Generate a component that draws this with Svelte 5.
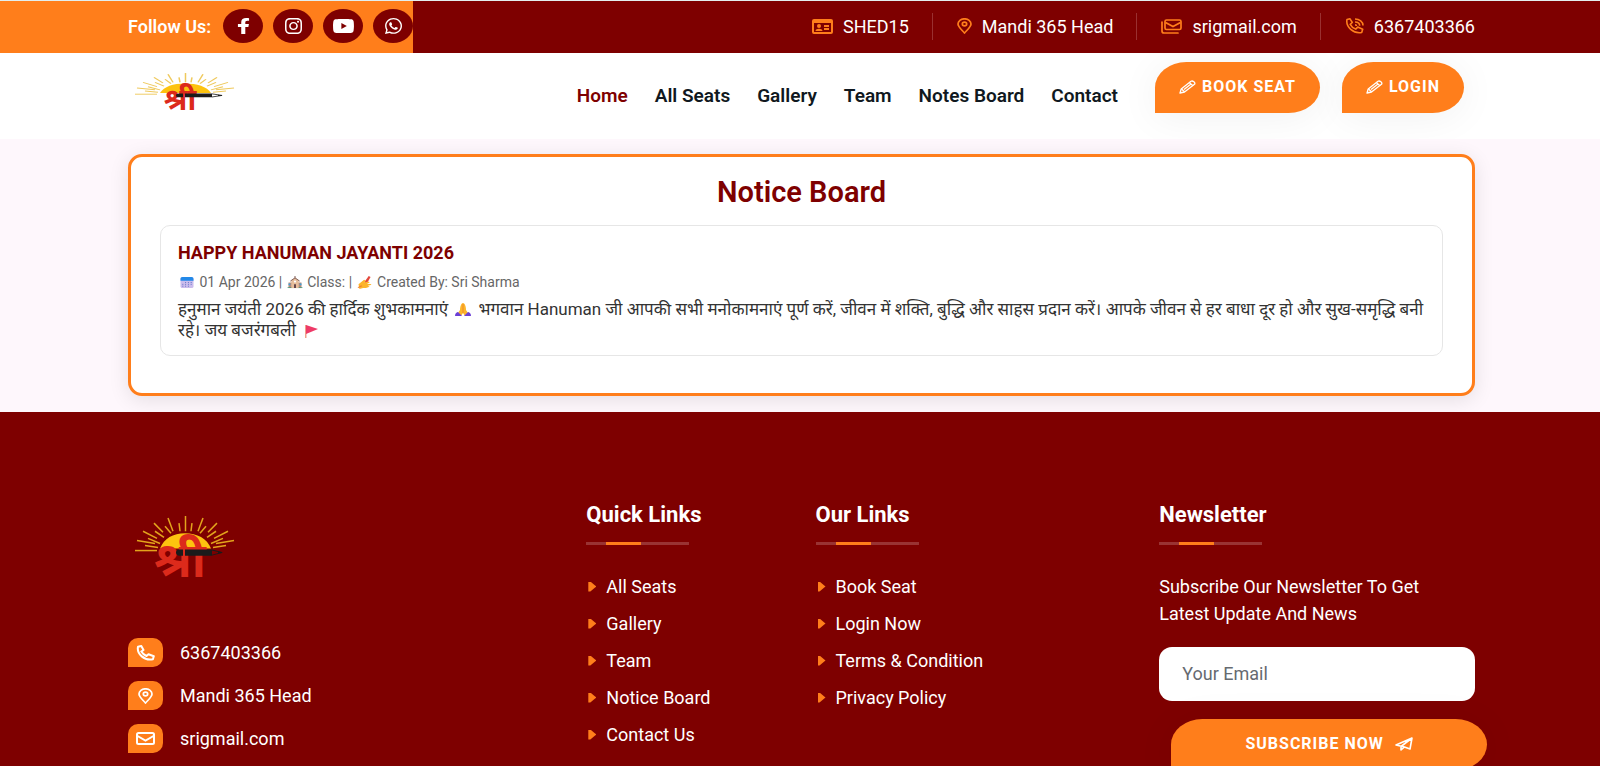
<script>
  const socials = [
    {
      name: "Facebook",
      box: "0 0 320 512",
      width: 13,
      path: "M279.14 288l14.22-92.66h-88.91v-60.13c0-25.35 12.42-50.06 52.24-50.06h40.42V6.26S260.43 0 225.36 0c-73.22 0-121.08 44.38-121.08 124.72v70.62H22.89V288h81.39v224h100.17V288z"
    },
    {
      name: "Instagram",
      box: "0 32 448 448",
      width: 17,
      path: "M224.1 141c-63.6 0-114.9 51.3-114.9 114.9s51.3 114.9 114.9 114.9S339 319.5 339 255.9 287.7 141 224.1 141zm0 189.6c-41.1 0-74.7-33.5-74.7-74.7s33.5-74.7 74.7-74.7 74.7 33.5 74.7 74.7-33.6 74.7-74.7 74.7zm146.4-194.3c0 14.9-12 26.8-26.8 26.8-14.9 0-26.8-12-26.8-26.8s12-26.8 26.8-26.8 26.8 12 26.8 26.8zm76.1 27.2c-1.7-35.9-9.9-67.7-36.2-93.9-26.2-26.2-58-34.4-93.9-36.2-37-2.1-147.9-2.1-184.9 0-35.8 1.7-67.6 9.9-93.9 36.1s-34.4 58-36.2 93.9c-2.1 37-2.1 147.9 0 184.9 1.7 35.9 9.9 67.7 36.2 93.9s58 34.4 93.9 36.2c37 2.1 147.9 2.1 184.9 0 35.9-1.7 67.7-9.9 93.9-36.2 26.2-26.2 34.4-58 36.2-93.9 2.1-37 2.1-147.8 0-184.8zM398.8 388c-7.8 19.6-22.9 34.7-42.6 42.6-29.5 11.7-99.5 9-132.1 9s-102.7 2.6-132.1-9c-19.6-7.8-34.7-22.9-42.6-42.6-11.7-29.5-9-99.5-9-132.1s-2.6-102.7 9-132.1c7.8-19.6 22.9-34.7 42.6-42.6 29.5-11.7 99.5-9 132.1-9s102.7-2.6 132.1 9c19.6 7.8 34.7 22.9 42.6 42.6 11.7 29.5 9 99.5 9 132.1s2.7 102.7-9 132.1z"
    },
    {
      name: "YouTube",
      box: "14 40 548 432",
      width: 21,
      path: "M549.655 124.083c-6.281-23.65-24.787-42.276-48.284-48.597C458.781 64 288 64 288 64S117.22 64 74.629 75.486c-23.497 6.322-42.003 24.947-48.284 48.597-11.412 42.867-11.412 132.305-11.412 132.305s0 89.438 11.412 132.305c6.281 23.65 24.787 41.5 48.284 47.821C117.22 448 288 448 288 448s170.78 0 213.371-11.486c23.497-6.321 42.003-24.171 48.284-47.821 11.412-42.867 11.412-132.305 11.412-132.305s0-89.438-11.412-132.305zm-317.51 213.508V175.185l142.739 81.205-142.739 81.201z"
    },
    {
      name: "WhatsApp",
      box: "0 32 448 448",
      width: 17,
      path: "M380.9 97.1C339 55.1 283.2 32 223.9 32c-122.4 0-222 99.6-222 222 0 39.1 10.2 77.3 29.6 111L0 480l117.7-30.9c32.4 17.7 68.9 27 106.1 27h.1c122.3 0 224.1-99.6 224.1-222 0-59.3-25.2-115-67.1-157zm-157 341.6c-33.2 0-65.7-8.9-94-25.7l-6.7-4-69.8 18.3L72 359.2l-4.4-7c-18.5-29.4-28.2-63.3-28.2-98.2 0-101.7 82.8-184.5 184.6-184.5 49.3 0 95.6 19.2 130.4 54.1 34.8 34.9 56.2 81.2 56.1 130.5 0 101.8-84.9 184.6-186.6 184.6zm101.2-138.2c-5.5-2.8-32.8-16.2-37.9-18-5.1-1.9-8.8-2.8-12.5 2.8-3.7 5.6-14.3 18-17.6 21.8-3.2 3.7-6.5 4.2-12 1.4-32.6-16.3-54-29.1-75.5-66-5.7-9.8 5.7-9.1 16.3-30.3 1.8-3.7.9-6.9-.5-9.7-1.4-2.8-12.5-30.1-17.1-41.2-4.5-10.8-9.1-9.3-12.5-9.5-3.2-.2-6.9-.2-10.6-.2-3.7 0-9.7 1.4-14.8 6.9-5.1 5.6-19.4 19-19.4 46.3 0 27.3 19.9 53.7 22.6 57.4 2.8 3.7 39.1 59.7 94.8 83.8 35.2 15.2 49 16.5 66.6 13.9 10.7-1.6 32.8-13.4 37.4-26.4 4.6-13 4.6-24.1 3.2-26.4-1.3-2.5-5-3.9-10.5-6.6z"
    }
  ];

  const info = [
    { icon: "card", text: "SHED15" },
    { icon: "pin", text: "Mandi 365 Head" },
    { icon: "mails", text: "srigmail.com" },
    { icon: "call", text: "6367403366" }
  ];

  const nav = ["Home", "All Seats", "Gallery", "Team", "Notes Board", "Contact"];

  const contacts = [
    { icon: "phone", text: "6367403366", href: "tel:6367403366" },
    { icon: "pin", text: "Mandi 365 Head", href: "#map" },
    { icon: "mail", text: "srigmail.com", href: "#mail" }
  ];

  const linkColumns = [
    {
      title: "Quick Links",
      links: ["All Seats", "Gallery", "Team", "Notice Board", "Contact Us"]
    },
    {
      title: "Our Links",
      links: ["Book Seat", "Login Now", "Terms & Condition", "Privacy Policy"]
    }
  ];

  // x1, y1, x2, y2 of the rays left of the middle one
  const rays = [
    [0, 34, 22, 34],
    [2, 24, 20, 27],
    [8, 15, 22, 22],
    [19, 7, 28, 16],
    [33, 2, 38, 15],
    [10, 29, 23, 31],
    [13, 22, 25, 27],
    [20, 15, 29, 21],
    [30, 10, 36, 17],
    [44, 7, 45, 15]
  ];

  let email = $state("");
</script>

{#snippet logo(height, size, ray)}
  <svg class="logo-mark" width="102" {height} viewBox="0 0 102 {height}" role="img" aria-label="Sri">
    <g transform="scale(1 {height / 61})">
      <g stroke={ray} stroke-width="1.5">
        <path d="M50.5 0V15" />
        {#each rays as [x1, y1, x2, y2], i}
          <line {x1} {y1} {x2} {y2} />
          {#if i > 0}
            <line x1={101 - x1} {y1} x2={101 - x2} {y2} />
          {/if}
        {/each}
      </g>
      <path d="M25 32C29 22 38 17 50 17s22 5 26 15z" fill="#fdc30f" />
    </g>
    <text class="logo-text" x="45" y={height - 1} font-size={size} text-anchor="middle">श्री</text>
    <g transform="scale(1 {height / 61})">
      <path d="M44 33h4v6h-4a3 3 0 0 1 0-6zM50 33h27v6H50z" fill="#1b1b1b" />
      <path d="M77 33.5l10 2.5-10 2.5" fill="none" stroke="#1b1b1b" />
      <path d="M83 35l5 1-5 1z" fill="#1b1b1b" />
    </g>
  </svg>
{/snippet}

{#snippet icon(name)}
  {#if name === "card"}
    <svg width="21" height="15" viewBox="0 0 21 15" aria-hidden="true">
      <path
        fill="currentColor"
        fill-rule="evenodd"
        d="M2 0h17a2 2 0 0 1 2 2v11a2 2 0 0 1-2 2H2a2 2 0 0 1-2-2V2a2 2 0 0 1 2-2zM2 4v9h17V4z"
      />
      <circle cx="7" cy="7" r="2" fill="currentColor" />
      <path d="M3.500 12c0-3 7-3 7 0zM12 6h5v2h-5zM12 9h5v2h-5z" fill="currentColor" />
    </svg>
  {:else if name === "pin"}
    <svg width="15" height="16" viewBox="0 0 15 16" fill="none" stroke="currentColor" stroke-width="1.7" aria-hidden="true">
      <path d="M7.500 15C5.500 12.500 1 9 1 6a6.500 5.200 0 0 1 13 0c0 3-4.500 6.500-6.500 9z" stroke-linejoin="round" />
      <ellipse cx="7.500" cy="6" rx="2.200" ry="1.800" />
    </svg>
  {:else if name === "mails"}
    <svg width="21" height="15" viewBox="0 0 21 15" fill="none" stroke="currentColor" stroke-width="1.700" aria-hidden="true">
      <rect x="4" y="1" width="16" height="9.500" rx="1.500" />
      <path d="M4.500 3.500L12 7.500l7.500-4" />
      <path d="M1 3v9a2 2 0 0 0 2 2h14" stroke-linecap="round" />
    </svg>
  {:else if name === "call"}
    <svg width="19" height="16" viewBox="0 0 19 16" fill="none" stroke="currentColor" stroke-width="1.600" aria-hidden="true">
      <path
        d="M2 1.500l3-.7L7.300 4.500 5.200 6.300c1.200 2.300 3 3.800 5.500 4.800l2-2 5 2.200-1 3.200C8.500 16 .5 9 2 1.500z"
        stroke-linejoin="round"
      />
      <path d="M10 1c4.500 0 8 2.800 8 6.500M10 4c3 0 4.700 1.500 4.700 3.700M10 6.800q1.500 0 1.500 1.200" />
    </svg>
  {:else if name === "phone"}
    <svg width="19" height="16" viewBox="0 0 19 16" fill="none" stroke="currentColor" stroke-width="2" aria-hidden="true">
      <path
        d="M2 1.800l3.300-.8L7.500 5 5.300 6.600c1.200 2 3 3.500 5.200 4.400l2-1.800 5.300 2-.9 3C8.500 16 .5 9 2 1.800z"
        stroke-linejoin="round"
      />
    </svg>
  {:else if name === "mail"}
    <svg width="19" height="13" viewBox="0 0 19 13" fill="none" stroke="currentColor" stroke-width="2" aria-hidden="true">
      <rect x="1" y="1" width="17" height="11" rx="1.500" />
      <path d="M1.500 4l8 4.500 8-4.500" />
    </svg>
  {:else if name === "pencil"}
    <svg width="17" height="14" viewBox="0 0 17 14" fill="none" stroke="currentColor" stroke-width="1.300" aria-hidden="true">
      <path d="M1 13l1.200-4L12 1.300c1.500-1 5 1.200 3.500 3L5.500 12z" stroke-linejoin="round" />
      <path d="M2.500 9l3 2.700M10.500 2.700l3.500 3M5 9.500l7-5.500" />
    </svg>
  {:else if name === "plane"}
    <svg width="18" height="14" viewBox="0 0 18 14" fill="none" stroke="currentColor" stroke-width="1.600" aria-hidden="true">
      <path d="M1 8L17 1l-2 11-5.500-2zM17 1L6 9.500V13l3.500-3" stroke-linejoin="round" />
    </svg>
  {/if}
{/snippet}

<div class="topbar">
  <div class="follow">
    <span>Follow Us:</span>
    <div class="socials">
      {#each socials as s}
        <a href="#{s.name.toLowerCase()}" aria-label={s.name}>
          <svg width={s.width} height="16" viewBox={s.box} preserveAspectRatio="none" aria-hidden="true">
            <path d={s.path} fill="#fff" />
          </svg>
        </a>
      {/each}
    </div>
  </div>
  <ul class="info">
    {#each info as item}
      <li>
        {@render icon(item.icon)}
        <span>{item.text}</span>
      </li>
    {/each}
  </ul>
</div>

<header>
  <a class="brand" href="#home" aria-label="Sri">{@render logo(38, 30, "#efc95c")}</a>
  <nav>
    {#each nav as item, i}
      <a href="#{item.toLowerCase().replace(' ', '-')}" class:active={i === 0}>{item}</a>
    {/each}
  </nav>
  <div class="actions">
    <button class="btn">{@render icon("pencil")}BOOK SEAT</button>
    <button class="btn">{@render icon("pencil")}LOGIN</button>
  </div>
</header>

<main>
  <section class="board">
    <h1>Notice Board</h1>
    <article>
      <h2>HAPPY HANUMAN JAYANTI 2026</h2>
      <p class="meta">
        <svg class="emoji" viewBox="0 0 16 14" aria-hidden="true">
          <rect x="1" y="1" width="14" height="12" rx="2" fill="#cbbcec" />
          <path d="M1 5V3a2 2 0 0 1 2-2h10a2 2 0 0 1 2 2v2z" fill="#2389e8" />
          <path d="M6 7h1M9 7h1M12 7h1M3 9h1M6 9h1M9 9h1M12 9h1M3 11h1M6 11h1M9 11h1" stroke="#5b6fc4" />
        </svg>
        01 Apr 2026 |
        <svg class="emoji" viewBox="0 0 16 14" aria-hidden="true">
          <path d="M1 7h14v6H1z" fill="#b98a78" />
          <path d="M4 5l4-3 4 3v8H4z" fill="#e6bd9b" />
          <path d="M3 5.500L8 2l5 3.500M8 2V0" stroke="#75504a" fill="none" />
          <path d="M1 8h2v2H1zM13 8h2v2h-2z" fill="#3aa2dd" />
          <path d="M7 9h2v4H7z" fill="#5a3d45" />
          <circle cx="8" cy="6" r="1.200" fill="#fff" />
          <path d="M0 12h4v1H0zM12 12h4v1h-4z" fill="#3c9c7d" />
        </svg>
        Class: |
        <svg class="emoji" viewBox="0 0 16 14" aria-hidden="true">
          <path d="M7 7l5-7 2 1-4 7z" fill="#e3483c" />
          <path d="M1 9l6-5 2 1-2 2 5-1 1 1-3 1.500h4l1 1-4 1 2 1-4 1.500H6l-4 1z" fill="#fdb429" />
          <path d="M0 12l4-2 1 1-4 2z" fill="#ef8130" />
        </svg>
        Created By: Sri Sharma
      </p>
      <p class="message" lang="hi">
        हनुमान जयंती 2026 की हार्दिक शुभकामनाएं
        <svg class="emoji" viewBox="0 0 16 14" aria-hidden="true">
          <path d="M8 0c2 0 3 4 3 7l2 3-3 3-2-3-2 3-3-3 2-3c0-3 1-7 3-7z" fill="#fdb62b" />
          <path d="M8 1v9" stroke="#ef8a29" />
          <path d="M0 13c0-3 2-4 3-4l4 4zM16 13c0-3-2-4-3-4l-4 4z" fill="#6b3fd6" />
        </svg>
        भगवान Hanuman जी आपकी सभी मनोकामनाएं पूर्ण करें, जीवन में शक्ति, बुद्धि और साहस प्रदान करें। आपके जीवन से हर बाधा दूर हो और सुख-समृद्धि बनी
        रहे। जय बजरंगबली
        <svg class="emoji" viewBox="0 0 16 14" aria-hidden="true">
          <path d="M2 1h1.500v13H2z" fill="#f0a08a" />
          <path d="M3 1l12 4-12 5z" fill="#ee3a68" />
        </svg>
      </p>
    </article>
  </section>
</main>

<footer>
  <div class="about">
    <a class="brand" href="#home" aria-label="Sri">{@render logo(62, 48, "#e3a41c")}</a>
    <ul class="contacts">
      {#each contacts as item}
        <li>
          <span class="chip">{@render icon(item.icon)}</span>
          <a href={item.href}>{item.text}</a>
        </li>
      {/each}
    </ul>
  </div>

  {#each linkColumns as col}
    <div>
      <h3>{col.title}</h3>
      <ul class="links">
        {#each col.links as link}
          <li><a href="#{link.toLowerCase().replaceAll(' ', '-')}">{link}</a></li>
        {/each}
      </ul>
    </div>
  {/each}

  <div class="newsletter">
    <h3>Newsletter</h3>
    <p>Subscribe Our Newsletter To Get Latest Update And News</p>
    <form onsubmit={e => e.preventDefault()}>
      <input type="email" bind:value={email} placeholder="Your Email" aria-label="Your Email" />
      <button class="btn">SUBSCRIBE NOW {@render icon("plane")}</button>
    </form>
  </div>
</footer>

<style>
  :global(html) {
    scrollbar-width: none;
  }

  :global(body) {
    background: #fef7fc;
    color: #fff;
    font-family: Roboto, "Noto Sans", "Noto Sans Devanagari", sans-serif;
    font-size: 18px;
    line-height: 27px;
  }

  a {
    color: inherit;
    text-decoration: none;
  }

  ul {
    list-style: none;
    margin: 0;
    padding: 0;
  }

  h1,
  h2,
  h3,
  p {
    margin: 0;
  }

  svg {
    flex: none;
  }

  .topbar {
    display: flex;
    justify-content: space-between;
    height: 52px;
    padding-right: calc(8% - 3px);
    border-top: 1px solid #e3eeee;
    background: #7e0000;
  }

  .follow {
    display: flex;
    align-items: center;
    gap: 12px;
    padding: 0 0 2px 8vw;
    background: #ff7e1b;
    font-weight: 600;
  }

  .socials {
    display: flex;
    gap: 10px;
  }

  .socials a {
    display: grid;
    place-items: center;
    width: 40px;
    height: 34px;
    border-radius: 50%;
    background: #7e0000;
  }

  .info {
    display: flex;
    align-items: center;
    padding-bottom: 2px;
  }

  .info li {
    display: flex;
    align-items: center;
    gap: 10px;
    padding-left: 24px;
  }

  .info li:not(:last-child) {
    padding-right: 23px;
    border-right: 1px solid #9a3030;
  }

  .info li svg {
    color: #ff7e1b;
  }

  header {
    display: flex;
    align-items: center;
    height: 86px;
    padding: 0 calc(8% + 8px) 0 8%;
    background: #fff;
    overflow: hidden;
  }

  .brand {
    display: block;
    padding-left: 7px;
  }

  .logo-mark {
    display: block;
    overflow: visible;
  }

  .logo-text {
    fill: #dc2a1b;
    font-weight: 700;
  }

  header .brand {
    padding-bottom: 8px;
  }

  nav {
    display: flex;
    gap: 27px;
    margin-left: auto;
    padding-bottom: 2px;
    color: #101820;
    font-size: 19px;
    font-weight: 600;
  }

  .active {
    color: #7e0000;
  }

  .actions {
    display: flex;
    align-self: flex-start;
    gap: 22px;
    margin: 9px 0 0 37px;
  }

  .btn {
    display: flex;
    align-items: center;
    justify-content: center;
    gap: 6px;
    height: 51px;
    padding: 0 24px 2px;
    border: 0;
    border-radius: 32px 32px 32px 0 / 26px 26px 26px 0;
    background: #ff7e1b;
    box-shadow: 0 4px 40px rgba(0, 0, 0, 0.06);
    color: #fff;
    font: 700 16px Roboto, sans-serif;
    letter-spacing: 1px;
    cursor: pointer;
  }

  main {
    padding: 15px calc(8% - 3px) 16px 8%;
  }

  .board {
    padding: 18px 29px 37px;
    border: 3px solid #ff7e1b;
    border-radius: 14px;
    background: #fff;
    box-shadow: 0 4px 20px rgba(0, 0, 0, 0.1);
  }

  h1 {
    margin-bottom: 16px;
    color: #7e0000;
    font-size: 29px;
    font-weight: 600;
    line-height: 34px;
    text-align: center;
  }

  article {
    padding: 15px 17px 14px;
    border: 1px solid #e6e6e6;
    border-radius: 10px;
  }

  h2 {
    color: #7e0000;
    font-size: 18px;
    font-weight: 700;
    line-height: 24px;
  }

  .meta {
    margin: 7px 0 6px;
    color: #666;
    font-size: 14px;
    line-height: 21px;
  }

  .message {
    color: #333;
    font-size: 17px;
    line-height: 21px;
  }

  .emoji {
    width: 16px;
    height: 13px;
    margin: 0 1px;
    vertical-align: -2px;
  }

  .message .emoji {
    width: 18px;
    height: 14px;
    margin: 0 2px;
  }

  footer {
    display: grid;
    grid-template-columns: 4fr 2fr 3fr 3fr;
    padding: 90px calc(8% - 31px) 40px 8%;
    background: #7e0000;
  }

  footer > div {
    padding-right: 28px;
  }

  .about .brand {
    margin: 14px 0 60px;
  }

  .contacts li {
    display: flex;
    align-items: center;
    gap: 17px;
    height: 29px;
    margin-bottom: 14px;
  }

  .chip {
    display: grid;
    place-items: center;
    width: 35px;
    height: 29px;
    border-radius: 10px 10px 10px 0;
    background: #ff7e1b;
  }

  h3 {
    margin-bottom: 28px;
    font-size: 22px;
    font-weight: 700;
    line-height: 26px;
  }

  h3::after {
    content: "";
    display: block;
    width: 103px;
    height: 3px;
    margin-top: 14px;
    background: linear-gradient(to right, #993333 20px, #ff7e1b 20px 55px, #993333 55px);
  }

  .links li {
    display: flex;
    align-items: center;
    gap: 10px;
    margin-bottom: 10px;
    padding-left: 2px;
  }

  .links li::before {
    content: "";
    width: 8px;
    height: 10px;
    background: #ff7e1b;
    clip-path: polygon(0 0, 25% 0, 100% 50%, 25% 100%, 0 100%);
  }

  .newsletter p {
    padding-right: 30px;
  }

  .newsletter input {
    display: block;
    box-sizing: border-box;
    width: 100%;
    height: 54px;
    margin: 20px 0 18px;
    padding: 0 23px 2px;
    border: 0;
    border-radius: 13px;
    color: #444;
    font: 18px Roboto, sans-serif;
  }

  .newsletter input::placeholder {
    color: #666a70;
  }

  .newsletter .btn {
    gap: 11px;
    width: 100%;
    margin-left: 12px;
  }
</style>
